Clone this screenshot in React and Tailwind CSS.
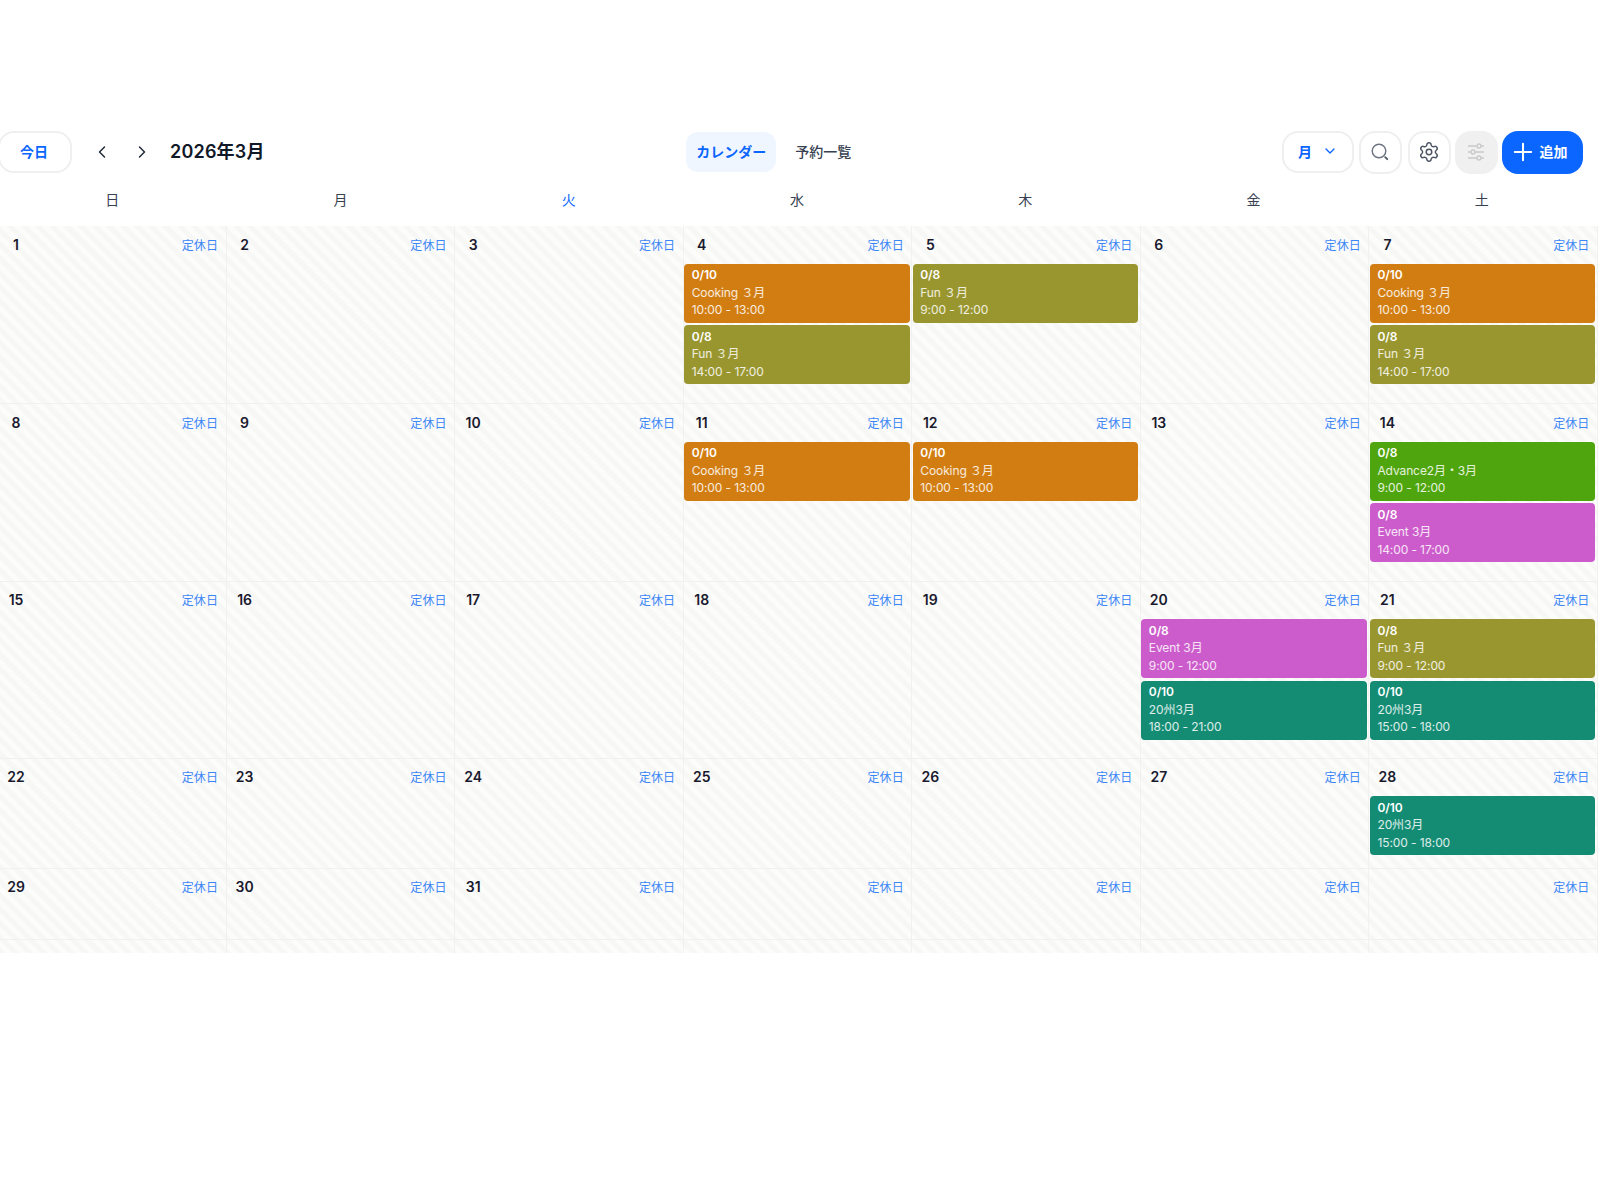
import React from "react";
import { ChevronLeft, ChevronRight, ChevronDown, Settings, Plus } from "lucide-react";

const COLORS = {
  cooking: "bg-[#d27d12]",
  fun: "bg-[#99962f]",
  advance: "bg-[#4fa50d]",
  event: "bg-[#cc5bcb]",
  teal: "bg-[#148c74]",
};

const cooking = { color: "cooking", seats: "0/10", name: "Cooking ３月", time: "10:00 - 13:00" };
const fun = (time) => ({ color: "fun", seats: "0/8", name: "Fun ３月", time });
const event = (time) => ({ color: "event", seats: "0/8", name: "Event 3月", time });
const teal = (time) => ({ color: "teal", seats: "0/10", name: "20州3月", time });

const EVENTS = {
  4: [cooking, fun("14:00 - 17:00")],
  5: [fun("9:00 - 12:00")],
  7: [cooking, fun("14:00 - 17:00")],
  11: [cooking],
  12: [cooking],
  14: [
    { color: "advance", seats: "0/8", name: "Advance2月・3月", time: "9:00 - 12:00" },
    event("14:00 - 17:00"),
  ],
  20: [event("9:00 - 12:00"), teal("18:00 - 21:00")],
  21: [fun("9:00 - 12:00"), teal("15:00 - 18:00")],
  28: [teal("15:00 - 18:00")],
};

const WEEKS = [
  { height: "h-[178px]", days: [1, 2, 3, 4, 5, 6, 7] },
  { height: "h-[177.5px]", days: [8, 9, 10, 11, 12, 13, 14] },
  { height: "h-[177px]", days: [15, 16, 17, 18, 19, 20, 21] },
  { height: "h-[110px]", days: [22, 23, 24, 25, 26, 27, 28] },
  { height: "h-[71px]", days: [29, 30, 31, null, null, null, null] },
];

const WEEKDAYS = ["日", "月", "火", "水", "木", "金", "土"];

function SearchIcon() {
  return (
    <svg width="20" height="20" viewBox="0 0 20 20" fill="none" strokeLinecap="round">
      <circle cx="9" cy="9" r="6.8" stroke="#6b7280" strokeWidth="1.4" />
      <path d="M15.2 15.2l2 2" stroke="#4b5563" strokeWidth="1.8" />
    </svg>
  );
}

function SlidersIcon() {
  return (
    <svg width="20" height="20" viewBox="0 0 20 20" fill="none" stroke="#c9c9c9" strokeWidth="1.3">
      <path d="M2 4h9M15 4h3M2 10h3M9 10h9M2 16h9M15 16h3" />
      <circle cx="13" cy="4" r="2" />
      <circle cx="7" cy="10" r="2" />
      <circle cx="13" cy="16" r="2" />
    </svg>
  );
}

function EventCard({ item }) {
  return (
    <div className={`${COLORS[item.color]} h-[59px] rounded-[4px] px-[7.5px] pt-[2.5px] text-[12px] leading-[17.5px] tracking-[-0.1px] text-white/85`}>
      <div className="font-semibold text-white">{item.seats}</div>
      <div>{item.name}</div>
      <div>{item.time}</div>
    </div>
  );
}

function DayCell({ day }) {
  const items = EVENTS[day] || [];
  return (
    <div className="border-r border-[#f1f1ef] pl-[0.5px] pr-[1.5px]">
      <div className="flex h-[37.5px] items-center justify-between pr-[6px]">
        <span className="w-[35px] text-center text-[14px] leading-[20px] font-semibold text-[#1a1a2e]">{day}</span>
        <span className="pt-0.5 text-[12px] leading-[18px] tracking-[0.1px] text-[#3b86f7]">定休日</span>
      </div>
      <div className="flex flex-col gap-[2.5px]">
        {items.map((item, i) => (
          <EventCard key={i} item={item} />
        ))}
      </div>
    </div>
  );
}

export default function App() {
  return (
    <div className="h-[1200px] w-[1600px] overflow-hidden bg-white font-[Inter,'Noto_Sans_CJK_JP',sans-serif]">
      <div className="-ml-0.5 w-[1600px] pt-[131px]">
        {/* toolbar */}
        <div className="flex h-[42px] items-center justify-between pr-[15px]">
          <div className="flex items-center">
            <button className="h-[42px] w-[74px] rounded-[16px] border-2 border-[#efefef] pb-0.5 pr-0.5 text-[14px] font-semibold text-[#0a66ff]">
              今日
            </button>
            <ChevronLeft className="ml-5 h-5 w-5 text-[#1f2937]" strokeWidth={1.75} />
            <ChevronRight className="ml-5 h-5 w-5 text-[#1f2937]" strokeWidth={1.75} />
            <span className="ml-[18px] pb-0.5 text-[18px] tracking-[0.2px] font-semibold text-[#111827]">2026年3月</span>
          </div>

          <div className="flex items-center gap-[19px] pb-px">
            <div className="flex h-10 w-[90px] items-center justify-center rounded-xl bg-[#f0f6ff] pb-px text-[14px] font-semibold text-[#0a66ff]">
              カレンダー
            </div>
            <span className="text-[14px] font-medium text-[#374151]">予約一覧</span>
          </div>

          <div className="flex items-center gap-[5px] pl-[9px]">
            <button className="flex h-[42px] w-[72px] items-center justify-between rounded-[16px] border-2 border-[#efefef] pb-0.5 pl-[14px] pr-[14px] text-[14px] font-semibold text-[#0a66ff]">
              月
              <ChevronDown className="h-4 w-4" strokeWidth={2} />
            </button>
            <button className="mr-px flex h-[43px] w-[43px] items-center justify-center rounded-[16px] border-2 border-[#efefef]">
              <SearchIcon />
            </button>
            <button className="flex h-[43px] w-[43px] items-center justify-center rounded-[16px] border-2 border-[#efefef] text-[#4b5563]">
              <Settings className="h-[22px] w-[22px]" strokeWidth={1.6} />
            </button>
            <button className="-mx-px flex h-[43px] w-[43px] items-center justify-center rounded-[16px] bg-[#f0f0f0]">
              <SlidersIcon />
            </button>
            <button className="flex h-[43px] w-[81px] items-center justify-center gap-0.5 rounded-[16px] bg-[#0a66ff] pr-[8px] text-[14px] font-semibold text-white">
              <Plus className="h-7 w-7" strokeWidth={1.75} />
              <span className="pb-px">追加</span>
            </button>
          </div>
        </div>

        {/* weekday header */}
        <div className="grid h-[53px] grid-cols-7 items-center pr-0.5">
          {WEEKDAYS.map((d) => (
            <div key={d} className={`text-center text-[14px] ${d === "火" ? "text-[#0a66ff]" : "text-[#374151]"}`}>
              {d}
            </div>
          ))}
        </div>

        {/* month grid */}
        <div className="bg-[repeating-linear-gradient(45deg,#f7f7f6_0px,#f7f7f6_5px,#fcfcfb_5px,#fcfcfb_10px)]">
          {WEEKS.map((week) => (
            <div key={week.days[0]} className={`grid grid-cols-7 border-b border-[#f1f1ef] ${week.height}`}>
              {week.days.map((day, i) => (
                <DayCell key={i} day={day} />
              ))}
            </div>
          ))}
          <div className="grid h-[13px] grid-cols-7">
            {WEEKDAYS.map((d) => (
              <div key={d} className="border-r border-[#f1f1ef]" />
            ))}
          </div>
        </div>
      </div>
    </div>
  );
}
